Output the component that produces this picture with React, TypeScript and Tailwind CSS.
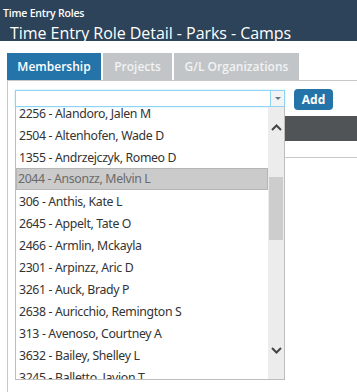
const people = [
  '2256 - Alandoro, Jalen M',
  '2504 - Altenhofen, Wade D',
  '1355 - Andrzejczyk, Romeo D',
  '2044 - Ansonzz, Melvin L',
  '306 - Anthis, Kate L',
  '2645 - Appelt, Tate O',
  '2466 - Armlin, Mckayla',
  '2301 - Arpinzz, Aric D',
  '3261 - Auck, Brady P',
  '2638 - Auricchio, Remington S',
  '313 - Avenoso, Courtney A',
  '3632 - Bailey, Shelley L',
  '3245 - Balletto, Javion T',
]

function Chevron({ up }: { up?: boolean }) {
  return (
    <svg width="11" height="7" viewBox="0 0 11 7" className="text-[#444]">
      <path
        d={up ? 'M1 6L5.5 1.5L10 6' : 'M1 1L5.5 5.5L10 1'}
        fill="none"
        stroke="currentColor"
        strokeWidth="2"
      />
    </svg>
  )
}

export default function App() {
  return (
    <div className="w-[357px] h-[392px] overflow-hidden bg-white font-['Open_Sans',sans-serif]">
      <div className="h-[41px] bg-[#2c4359] text-white pl-[3px]">
        <p className="text-[10.5px] font-semibold leading-none pt-[8px] tracking-[-0.2px]">Time Entry Roles</p>
        <p className="text-[16px] leading-none pt-[6px] pl-[7px] tracking-[-0.05px]">
          Time Entry Role Detail - Parks - Camps
        </p>
      </div>

      <div className="flex gap-[2px] pl-[7px] pt-[12px] text-[12px] font-semibold">
        <div className="w-[94px] h-[27px] bg-[#2574a9] text-white flex items-center justify-center">Membership</div>
        <div className="w-[69px] h-[27px] bg-[#c2c5c7] text-[#f1f3f4] flex items-center justify-center">Projects</div>
        <div className="w-[125px] h-[27px] bg-[#c2c5c7] text-[#f1f3f4] flex items-center justify-center">G/L Organizations</div>
      </div>

      <div className="ml-[7px] border-l border-t border-[#c9c9c9] h-[320px] flex">
        <div className="ml-[7px] mt-[9px] w-[270px]">
          <div className="h-[17px] border border-[#8fd4f2] shadow-[0_0_2px_#b5e6fa] flex">
            <div className="flex-1" />
            <div className="w-[14px] border-l border-[#8fd4f2] bg-[#f3f3f3] flex items-center justify-center">
              <div className="w-0 h-0 border-l-[3px] border-r-[3px] border-t-[3px] border-l-transparent border-r-transparent border-t-[#5a7a8e]" />
            </div>
          </div>
          <div className="h-[273px] border border-t-0 border-[#bdbdbd] flex overflow-hidden text-[12.3px] text-[#333] font-['Noto_Sans',sans-serif] tracking-[-0.35px]">
            <div className="flex-1 overflow-hidden">
              <div className="-mt-[5px]">
                {people.map((p, i) => (
                  <div
                    key={p}
                    className={
                      i === 3
                        ? 'h-[22px] leading-[20px] pl-[1px] bg-[#cbcbcb] border border-[#b5b5b5] text-[#6a6a6a]'
                        : 'h-[22px] leading-[22px] pl-[2px] border border-transparent'
                    }
                  >
                    {p}
                  </div>
                ))}
              </div>
            </div>
            <div className="w-[16px] bg-[#ececec] flex flex-col items-center">
              <div className="h-[32px] flex items-center pt-[9px]">
                <Chevron up />
              </div>
              <div className="mt-[38px] w-[14px] h-[63px] bg-[#cdcdcd]" />
              <div className="flex-1" />
              <div className="h-[36px] flex items-start pt-[4px]">
                <Chevron />
              </div>
            </div>
          </div>
        </div>

        <div className="flex-1 flex flex-col">
          <div className="flex pl-[9px] pt-[8px]">
            <div className="w-[39px] h-[21px] rounded-[4px] bg-[#2574a9] text-white text-[12px] font-bold flex items-center justify-center">
              Add
            </div>
          </div>
          <div className="mt-[6px] h-[25px] bg-[#505456]" />
          <div className="mt-[16px] border-t border-[#c9c9c9]" />
        </div>
      </div>
    </div>
  )
}
